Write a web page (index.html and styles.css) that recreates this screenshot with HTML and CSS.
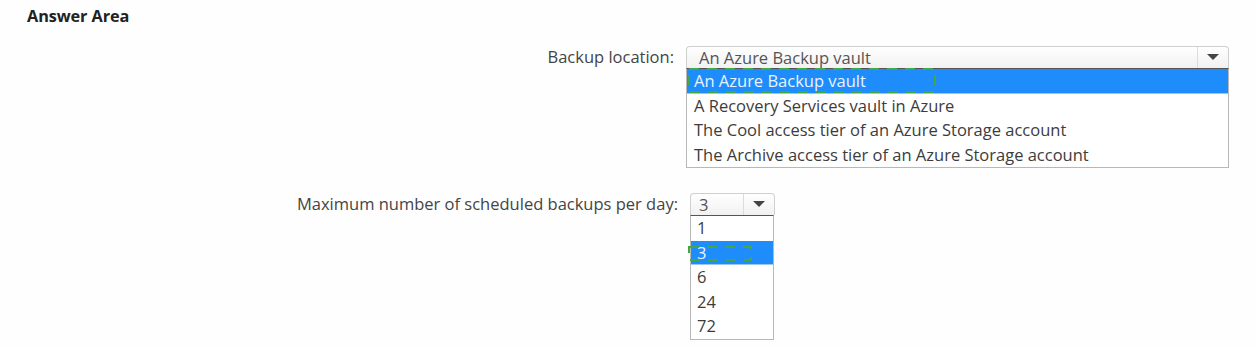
FILE: index.html
```html
<!DOCTYPE html>
<html>
<head>
<meta charset="utf-8">
<link rel="stylesheet" href="styles.css">
</head>
<body>
<div class="page">
  <h1 class="title">Answer Area</h1>

  <div class="row row-location">
    <div class="label">Backup location:</div>
    <div class="dropdown dd-wide">
      <div class="dd-head">
        <span class="dd-value">An Azure Backup vault</span>
        <span class="dd-arrow"><span class="tri"></span></span>
      </div>
      <ul class="dd-list">
        <li class="dd-item selected">An Azure Backup vault
          <svg class="focus focus-wide" viewBox="0 0 248 25" width="248" height="25"><rect x="1" y="1" width="246" height="23" fill="none" stroke="#43a843" stroke-width="2" stroke-dasharray="10 8"/></svg>
        </li>
        <li class="dd-item">A Recovery Services vault in Azure</li>
        <li class="dd-item">The Cool access tier of an Azure Storage account</li>
        <li class="dd-item">The Archive access tier of an Azure Storage account</li>
      </ul>
    </div>
  </div>

  <div class="row row-max">
    <div class="label">Maximum number of scheduled backups per day:</div>
    <div class="dropdown dd-narrow">
      <div class="dd-head">
        <span class="dd-value">3</span>
        <span class="dd-arrow"><span class="tri"></span></span>
      </div>
      <ul class="dd-list">
        <li class="dd-item">1</li>
        <li class="dd-item selected">3
          <svg class="focus focus-narrow" viewBox="0 0 64 15" width="64" height="15"><rect x="1" y="1" width="62" height="13" fill="none" stroke="#43a843" stroke-width="2" stroke-dasharray="10 8"/></svg>
        </li>
        <li class="dd-item">6</li>
        <li class="dd-item">24</li>
        <li class="dd-item">72</li>
      </ul>
    </div>
  </div>
</div>
</body>
</html>
```

FILE: styles.css
```css
* { box-sizing: border-box; }
html, body { margin: 0; padding: 0; background: #fefefe; }
body {
  font-family: "Open Sans", "Noto Sans", "Liberation Sans", sans-serif;
  color: #3c3c3c;
  width: 1257px;
  height: 346px;
  overflow: hidden;
}
.page { padding: 5px 0 0 27px; }
.title {
  margin: 0;
  font-size: 16.3px;
  font-weight: 700;
  color: #222;
  line-height: 22px;
  letter-spacing: -0.1px;
}
.row { display: flex; align-items: flex-start; }
.row-location { margin-top: 19px; }
.row-location .label { width: 659px; }
.row-max { margin-top: 25px; }
.row-max .label { width: 663px; }
.label {
  text-align: right;
  padding-right: 12px;
  font-size: 16.5px;
  line-height: 22px;
  color: #444;
  flex: none;
}
.dropdown { flex: none; }
.dd-wide { width: 543px; }
.dd-narrow { width: 85px; }
.dd-head {
  display: flex;
  height: 22px;
  border: 1px solid #cfcfcf;
  border-bottom: none;
  border-radius: 4px 4px 0 0;
  background: linear-gradient(#ffffff, #f1f1f1);
}
.dd-value {
  flex: 1;
  padding-left: 12px;
  font-size: 16.5px;
  line-height: 22px;
  color: #555;
  border-right: 1px solid #dcdcdc;
}
.dd-narrow .dd-value { padding-left: 8px; }
.dd-arrow {
  width: 30px;
  display: flex;
  align-items: center;
  justify-content: center;
}
.tri {
  width: 0; height: 0;
  border-left: 6px solid transparent;
  border-right: 6px solid transparent;
  border-top: 6px solid #444;
  margin-top: -2px;
}
.dd-list {
  list-style: none;
  margin: 0;
  padding: 0;
  border: 1px solid #b8b8b8;
  border-top: 1px solid #555;
  background: #fff;
}
.dd-wide .dd-list { width: 543px; }
.dd-narrow .dd-list { width: 84px; }
.dd-item {
  position: relative;
  height: 24.5px;
  line-height: 24px;
  padding-left: 7px;
  font-size: 16.5px;
  color: #3c3c3c;
  white-space: nowrap;
}
.dd-narrow .dd-item { padding-left: 6px; }
.dd-item.selected {
  background: #1e8cfa;
  color: #eaf4ff;
  border-bottom: 1px solid #9cc8f0;
}
.focus { position: absolute; left: 1px; top: -1px; pointer-events: none; }
.focus-narrow { top: 5px; left: -3px; }
```
